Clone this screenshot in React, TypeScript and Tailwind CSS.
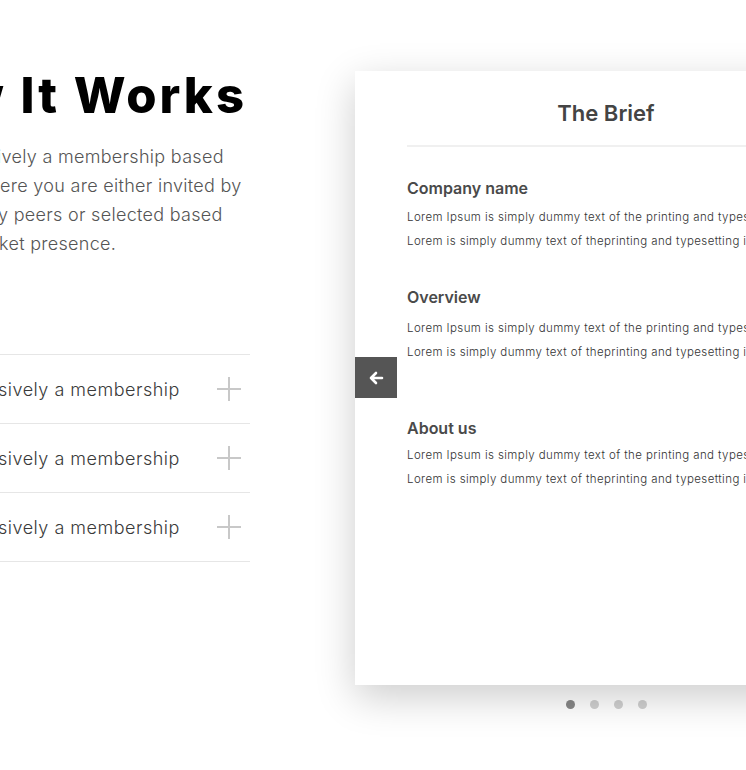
const intro = [
  { text: "ively a membership based", shift: "-ml-[3px]" },
  { text: "ere you are either invited by", shift: "ml-0" },
  { text: "y peers or selected based", shift: "-ml-[2px]" },
  { text: "ket presence.", shift: "-ml-[1px]" },
];

const sections = [
  { title: "Company name", gap: "mt-[30px]", lines: "mt-[6px]" },
  { title: "Overview", gap: "mt-[33px]", lines: "mt-[8px]" },
  { title: "About us", gap: "mt-[53px]", lines: "mt-[4px]" },
];

const PlusIcon = () => (
  <svg width="26" height="26" viewBox="0 0 26 26" className="text-[#c8c8c8]">
    <path d="M13 1v24M1 13h24" stroke="currentColor" strokeWidth="2" />
  </svg>
);

const ArrowIcon = () => (
  <svg width="16" height="16" viewBox="0 0 16 16" fill="none" className="text-white">
    <path
      d="M14 8H3M8 3L3 8l5 5"
      stroke="currentColor"
      strokeWidth="2.6"
      strokeLinecap="round"
      strokeLinejoin="round"
    />
  </svg>
);

const AccordionRow = () => (
  <div className="flex h-[69px] items-center justify-between border-b border-[#e6e6e6] pr-[8px]">
    <span className="-ml-[2px] text-[18px] font-light tracking-[0.5px] text-[#3a3a3a]">
      sively a membership
    </span>
    <PlusIcon />
  </div>
);

const BriefCard = () => (
  <div className="relative h-[614px] w-[502px] shrink-0 bg-white px-[52px] shadow-[0_12px_38px_rgba(0,0,0,0.2)]">
    <h2 className="pt-[28px] text-center text-[22px] font-semibold leading-[28px] text-[#444]">
      The Brief
    </h2>
    <div className="mt-[18px] border-b-2 border-[#f0f0f0]" />
    {sections.map((s) => (
      <div key={s.title} className={s.gap}>
        <h3 className="text-[16px] font-semibold leading-[22px] text-[#4a4a4a]">
          {s.title}
        </h3>
        <div
          className={`${s.lines} whitespace-nowrap text-[11.5px] font-light leading-[24px] tracking-[0.4px] text-[#333]`}
        >
          <p>Lorem Ipsum is simply dummy text of the printing and typesetting industry.</p>
          <p>Lorem is simply dummy text of theprinting and typesetting industry.</p>
        </div>
      </div>
    ))}
    <button className="absolute left-0 top-[286px] flex h-[41px] w-[42px] items-center justify-center bg-[#555]">
      <ArrowIcon />
    </button>
  </div>
);

export default function App() {
  return (
    <div
      className="relative flex h-[770px] w-[746px] overflow-hidden bg-white"
      style={{ fontFamily: "Inter, 'Noto Sans', sans-serif" }}
    >
      <div className="w-[250px] shrink-0">
        <div className="mt-[64px] flex justify-end whitespace-nowrap pr-[3px]">
          <h1 className="text-[49px] font-extrabold leading-[64px] tracking-[3px] text-black">
            How It Works
          </h1>
        </div>
        <div className="mt-[14px] whitespace-nowrap text-[18px] font-light leading-[29px] tracking-[0.3px] text-[#555]">
          {intro.map((l) => (
            <p key={l.text} className={l.shift}>
              {l.text}
            </p>
          ))}
        </div>
        <div className="mt-[96px] border-t border-[#e6e6e6]">
          <AccordionRow />
          <AccordionRow />
          <AccordionRow />
        </div>
      </div>
      <div className="ml-[105px] mt-[71px] flex flex-col items-center">
        <BriefCard />
        <div className="mt-[15px] flex gap-[15px]">
          <span className="size-[9px] rounded-full bg-[#888]" />
          <span className="size-[9px] rounded-full bg-[#d0d0d0]" />
          <span className="size-[9px] rounded-full bg-[#d0d0d0]" />
          <span className="size-[9px] rounded-full bg-[#d0d0d0]" />
        </div>
      </div>
    </div>
  );
}
